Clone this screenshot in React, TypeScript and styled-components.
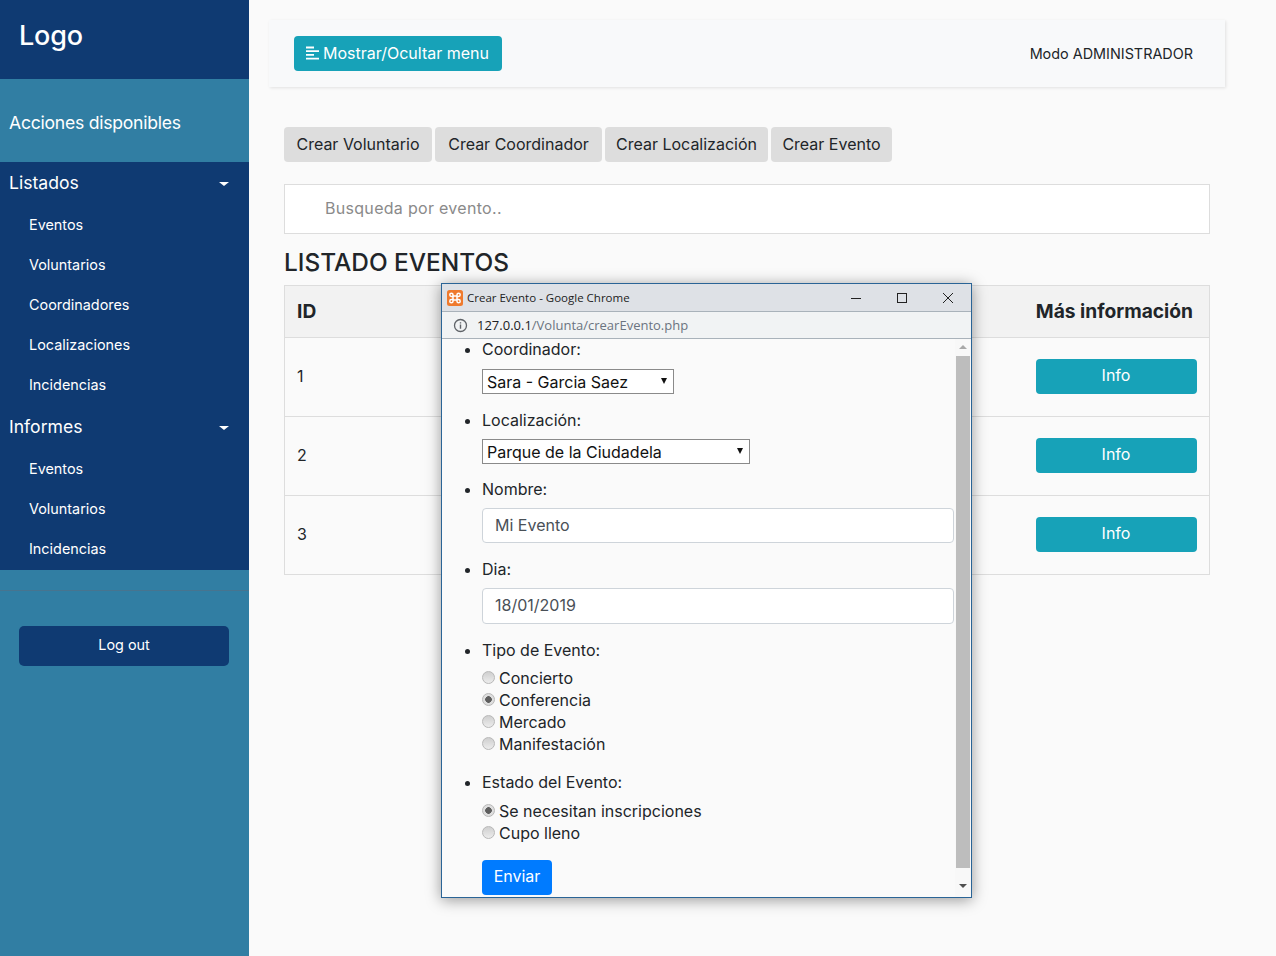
import React, { FC } from "react";
import styled, { createGlobalStyle } from "styled-components";

const FONT = `Inter, "Open Sans", "Liberation Sans", sans-serif`;

const GlobalStyle = createGlobalStyle`
  html, body {
    margin: 0;
    padding: 0;
    height: 956px;
    overflow: hidden;
    background: #fafafa;
    font-family: ${FONT};
    color: #212529;
  }
  * {
    box-sizing: border-box;
  }
`;

const MENU = [
  { title: "Listados", items: ["Eventos", "Voluntarios", "Coordinadores", "Localizaciones", "Incidencias"] },
  { title: "Informes", items: ["Eventos", "Voluntarios", "Incidencias"] },
];

const ACTIONS = [
  { label: "Crear Voluntario", width: 148 },
  { label: "Crear Coordinador", width: 167 },
  { label: "Crear Localización", width: 163 },
  { label: "Crear Evento", width: 121 },
];

const TIPOS = [
  { label: "Concierto", checked: false },
  { label: "Conferencia", checked: true },
  { label: "Mercado", checked: false },
  { label: "Manifestación", checked: false },
];

const ESTADOS = [
  { label: "Se necesitan inscripciones", checked: true },
  { label: "Cupo lleno", checked: false },
];

export default function App() {
  return (
    <Page>
      <GlobalStyle />
      <Sidebar />
      <Content>
        <TopBar>
          <ToggleButton>
            <AlignIcon />
            Mostrar/Ocultar menu
          </ToggleButton>
          <Mode>Modo ADMINISTRADOR</Mode>
        </TopBar>
        <Actions>
          {ACTIONS.map((a) => (
            <ActionButton key={a.label} $width={a.width}>
              {a.label}
            </ActionButton>
          ))}
        </Actions>
        <Search placeholder="Busqueda por evento.." />
        <Heading>LISTADO EVENTOS</Heading>
        <Table>
          <thead>
            <tr>
              <HeadCell>ID</HeadCell>
              <HeadCell $right>Más información</HeadCell>
            </tr>
          </thead>
          <tbody>
            {[1, 2, 3].map((id) => (
              <tr key={id}>
                <Cell>{id}</Cell>
                <InfoCell>
                  <InfoButton>Info</InfoButton>
                </InfoCell>
              </tr>
            ))}
          </tbody>
        </Table>
      </Content>
      <PopupWindow />
    </Page>
  );
}

const Sidebar: FC = () => (
  <Side>
    <Brand>Logo</Brand>
    <Available>Acciones disponibles</Available>
    <Menu>
      {MENU.map((group) => (
        <li key={group.title}>
          <GroupTitle>
            {group.title}
            <Caret />
          </GroupTitle>
          {group.items.map((item) => (
            <SubItem key={item}>{item}</SubItem>
          ))}
        </li>
      ))}
    </Menu>
    <Divider />
    <LogOut>Log out</LogOut>
  </Side>
);

const PopupWindow: FC = () => (
  <Popup>
    <TitleBar>
      <XamppIcon />
      <WindowTitle>Crear Evento - Google Chrome</WindowTitle>
      <WindowControls>
        <svg width="12" height="12" viewBox="0 0 12 12">
          <path d="M1 6.5h10" stroke="#222" strokeWidth="1" />
        </svg>
        <svg width="12" height="12" viewBox="0 0 12 12">
          <rect x="1.5" y="1.5" width="9" height="9" fill="none" stroke="#222" strokeWidth="1" />
        </svg>
        <svg width="12" height="12" viewBox="0 0 12 12">
          <path d="M1 1l10 10M11 1L1 11" stroke="#222" strokeWidth="1" fill="none" />
        </svg>
      </WindowControls>
    </TitleBar>
    <AddressBar>
      <svg width="15" height="15" viewBox="0 0 15 15">
        <circle cx="7.5" cy="7.5" r="6" fill="none" stroke="#5f6368" strokeWidth="1.3" />
        <path d="M7.5 6.6v4.2M7.5 4.2v1.3" stroke="#5f6368" strokeWidth="1.4" fill="none" />
      </svg>
      <Url>
        127.0.0.1<UrlPath>/Volunta/crearEvento.php</UrlPath>
      </Url>
    </AddressBar>
    <PopupBody>
      <FormArea>
        <FormList>
          <FormItem $gap={9} $after={16}>
            <FieldLabel>Coordinador:</FieldLabel>
            <SelectWrap $width={192}>
              <SelectBox defaultValue="sara">
                <option value="sara">Sara - Garcia Saez</option>
              </SelectBox>
            </SelectWrap>
          </FormItem>
          <FormItem $gap={8} $after={15}>
            <FieldLabel>Localización:</FieldLabel>
            <SelectWrap $width={268}>
              <SelectBox defaultValue="parque">
                <option value="parque">Parque de la Ciudadela</option>
              </SelectBox>
            </SelectWrap>
          </FormItem>
          <FormItem $gap={8} $after={16}>
            <FieldLabel>Nombre:</FieldLabel>
            <TextField $height={35} defaultValue="Mi Evento" />
          </FormItem>
          <FormItem $gap={8} $after={16}>
            <FieldLabel>Dia:</FieldLabel>
            <TextField $height={36} defaultValue="18/01/2019" />
          </FormItem>
          <FormItem $gap={6} $after={17}>
            <FieldLabel>Tipo de Evento:</FieldLabel>
            <Radios>
              {TIPOS.map((t) => (
                <RadioRow key={t.label}>
                  <Radio type="radio" name="tipo" defaultChecked={t.checked} />
                  {t.label}
                </RadioRow>
              ))}
            </Radios>
          </FormItem>
          <FormItem $gap={7} $after={16}>
            <FieldLabel>Estado del Evento:</FieldLabel>
            <Radios>
              {ESTADOS.map((t) => (
                <RadioRow key={t.label}>
                  <Radio type="radio" name="estado" defaultChecked={t.checked} />
                  {t.label}
                </RadioRow>
              ))}
            </Radios>
          </FormItem>
        </FormList>
        <SendButton>Enviar</SendButton>
      </FormArea>
      <ScrollTrack>
        <ScrollArrow $up />
        <ScrollThumb />
        <ScrollArrow />
      </ScrollTrack>
    </PopupBody>
  </Popup>
);

const AlignIcon: FC = () => (
  <svg width="14" height="14" viewBox="0 0 14 14">
    <path d="M0 1.5h8M0 5.2h13M0 8.9h8M0 12.6h13" stroke="#fff" strokeWidth="1.8" fill="none" />
  </svg>
);

const XamppIcon: FC = () => (
  <svg width="16" height="16" viewBox="0 0 16 16">
    <rect width="16" height="16" rx="2.5" fill="#ef7a2d" />
    <path
      d="M6 6H10V10H6ZM6 6V4.8A1.6 1.6 0 1 0 4.4 6.4H6M10 6V4.8A1.6 1.6 0 1 1 11.6 6.4H10M6 10V11.2A1.6 1.6 0 1 1 4.4 9.6H6M10 10V11.2A1.6 1.6 0 1 0 11.6 9.6H10"
      fill="none"
      stroke="#fff"
      strokeWidth="1.5"
    />
  </svg>
);

const Page = styled.div`
  position: relative;
  display: flex;
  width: 1276px;
  height: 956px;
  overflow: hidden;
`;

const Side = styled.nav`
  width: 249px;
  flex: none;
  height: 956px;
  background: #317ea3;
  color: #fff;
`;

const Brand = styled.h3`
  margin: 0;
  height: 79px;
  padding: 17px 19px 0;
  background: #0f3a72;
  font-size: 27px;
  line-height: 38px;
  font-weight: 500;
  letter-spacing: -0.2px;
`;

const Available = styled.p`
  margin: 0;
  height: 83px;
  padding: 3px 9px 0;
  display: flex;
  align-items: center;
  font-size: 17.6px;
  letter-spacing: -0.25px;
`;

const Menu = styled.ul`
  list-style: none;
  margin: 0;
  padding: 0;
  background: #0f3a72;
`;

const GroupTitle = styled.div`
  position: relative;
  display: flex;
  align-items: center;
  height: 43px;
  padding: 0 9px 2px;
  font-size: 17.6px;
`;

const Caret = styled.span`
  position: absolute;
  right: 20px;
  top: 20px;
  border-top: 4.5px solid #fff;
  border-left: 5px solid transparent;
  border-right: 5px solid transparent;
`;

const SubItem = styled.div`
  display: flex;
  align-items: center;
  height: 40px;
  padding: 0 0 2px 29px;
  font-size: 14.4px;
  &:last-child {
    height: 41px;
  }
`;

const Divider = styled.div`
  height: 1px;
  margin-top: 20px;
  background: #47748f;
`;

const LogOut = styled.button`
  display: block;
  width: 210px;
  height: 40px;
  margin: 35px 0 0 19px;
  padding: 0 0 3px;
  border: none;
  border-radius: 5px;
  background: #0f3a72;
  color: #fff;
  font-family: ${FONT};
  font-size: 14.4px;
`;

const Content = styled.main`
  flex: 1;
  min-width: 0;
  padding: 20px 66px 0 20px;
`;

const TopBar = styled.header`
  display: flex;
  align-items: center;
  justify-content: space-between;
  height: 67px;
  margin-right: -15px;
  padding: 0 32px 0 25px;
  background: #f8f9fa;
  box-shadow: 1px 1px 3px rgba(0, 0, 0, 0.1);
`;

const ToggleButton = styled.button`
  display: flex;
  align-items: center;
  gap: 3px;
  height: 35px;
  padding: 0 12px 2px;
  border: none;
  border-radius: 4px;
  background: #17a2b8;
  color: #fff;
  font-family: ${FONT};
  font-size: 16px;
  width: 208px;
`;

const Mode = styled.span`
  font-size: 14.4px;
  padding-bottom: 1px;
`;

const Actions = styled.div`
  display: flex;
  gap: 3px;
  margin: 40px 0 0 15px;
`;

const ActionButton = styled.button<{ $width: number }>`
  width: ${({ $width }) => $width}px;
  height: 35px;
  padding: 0 0 2px;
  border: none;
  border-radius: 4px;
  background: #ddd;
  color: #212529;
  font-family: ${FONT};
  font-size: 16px;
`;

const Search = styled.input`
  display: block;
  width: 926px;
  height: 50px;
  margin: 22px 0 0 15px;
  padding: 0 40px 2px;
  border: 1px solid #ddd;
  background: #fff;
  font-family: ${FONT};
  font-size: 16px;
  letter-spacing: 0.3px;
  outline: none;
  &::placeholder {
    color: #8a8a8a;
  }
`;

const Heading = styled.h2`
  margin: 12px 0 0 15px;
  height: 39px;
  font-size: 24.4px;
  line-height: 33px;
  font-weight: 500;
`;

const Table = styled.table`
  width: 926px;
  margin-left: 15px;
  border-collapse: collapse;
`;

const HeadCell = styled.th<{ $right?: boolean }>`
  height: 52px;
  padding: ${({ $right }) => ($right ? "0 16px 2px 0" : "0 12px 2px")};
  background: #f2f2f2;
  border: 1px solid #ddd;
  border-left: ${({ $right }) => ($right ? "none" : "1px solid #ddd")};
  border-right: ${({ $right }) => ($right ? "1px solid #ddd" : "none")};
  text-align: ${({ $right }) => ($right ? "right" : "left")};
  font-size: 19.2px;
  font-weight: 700;
  white-space: nowrap;
`;

const Cell = styled.td`
  height: 79px;
  padding: 0 12px 3px;
  border: 1px solid #ddd;
  border-right: none;
  font-size: 16px;
`;

const InfoCell = styled.td`
  width: 174px;
  padding: 0 12px 2px 0;
  border: 1px solid #ddd;
  border-left: none;
`;

const InfoButton = styled.button`
  display: block;
  width: 161px;
  height: 35px;
  padding: 0 0 2px;
  border: none;
  border-radius: 4px;
  background: #17a2b8;
  color: #fff;
  font-family: ${FONT};
  font-size: 16px;
`;

const Popup = styled.section`
  position: absolute;
  left: 441px;
  top: 283px;
  width: 531px;
  height: 615px;
  display: flex;
  flex-direction: column;
  border: 1px solid #2a6496;
  background: #fafafa;
  box-shadow: 0 2px 14px rgba(0, 0, 0, 0.4);
`;

const TitleBar = styled.div`
  display: flex;
  align-items: center;
  height: 28px;
  flex: none;
  padding-left: 5px;
  background: #dee1e6;
  border-bottom: 1px solid #a9b2ba;
`;

const WindowTitle = styled.span`
  margin-left: 4px;
  font-family: "Open Sans", sans-serif;
  font-size: 11.5px;
  color: #222;
`;

const WindowControls = styled.div`
  display: flex;
  gap: 34px;
  margin-left: auto;
  margin-right: 17px;
`;

const AddressBar = styled.div`
  display: flex;
  align-items: center;
  gap: 9px;
  height: 27px;
  flex: none;
  padding-left: 11px;
  background: #f1f3f4;
  border-bottom: 1px solid #a9b2ba;
`;

const Url = styled.span`
  font-family: "Open Sans", sans-serif;
  font-size: 13px;
  color: #202124;
`;

const UrlPath = styled.span`
  color: #6b7480;
`;

const PopupBody = styled.div`
  flex: 1;
  min-height: 0;
  display: flex;
  overflow: hidden;
`;

const FormArea = styled.div`
  flex: 1;
  min-width: 0;
  padding-left: 40px;
`;

const FormList = styled.ul`
  margin: 0;
  padding: 0;
  font-size: 16px;
`;

const FormItem = styled.li<{ $gap: number; $after: number }>`
  display: flex;
  flex-direction: column;
  align-items: flex-start;
  gap: ${({ $gap }) => $gap}px;
  margin-bottom: ${({ $after }) => $after}px;
  &::before {
    content: "";
    position: absolute;
    margin: 9px 0 0 -17px;
    width: 5px;
    height: 5px;
    border-radius: 50%;
    background: #212529;
  }
`;

const FieldLabel = styled.span`
  display: block;
  line-height: 21px;
`;

const SelectWrap = styled.div<{ $width: number }>`
  position: relative;
  width: ${({ $width }) => $width}px;
  &::after {
    content: "";
    position: absolute;
    right: 7px;
    top: 9px;
    border-top: 6px solid #111;
    border-left: 3px solid transparent;
    border-right: 3px solid transparent;
  }
`;

const SelectBox = styled.select`
  display: block;
  width: 100%;
  height: 25px;
  padding: 0 4px;
  appearance: none;
  border: 1px solid #8a8a8a;
  border-radius: 0;
  background: #fff;
  color: #111;
  font-family: ${FONT};
  font-size: 16px;
  outline: none;
`;

const TextField = styled.input<{ $height: number }>`
  display: block;
  width: 472px;
  height: ${({ $height }) => $height}px;
  padding: 0 12px 2px;
  border: 1px solid #ced4da;
  border-radius: 4px;
  background: #fff;
  color: #495057;
  font-family: ${FONT};
  font-size: 16px;
  outline: none;
`;

const Radios = styled.div`
  display: flex;
  flex-direction: column;
`;

const RadioRow = styled.label`
  display: flex;
  align-items: center;
  height: 22px;
  gap: 4px;
  font-size: 16px;
`;

const Radio = styled.input`
  appearance: none;
  width: 13px;
  height: 13px;
  margin: -2px 0 0;
  border-radius: 50%;
  border: 1px solid #b8b8b8;
  background: linear-gradient(#cfcfcf, #ececec);
  &:checked {
    background: radial-gradient(circle, #5e5e5e 0 3px, #dedede 3.6px);
  }
`;

const SendButton = styled.button`
  display: block;
  width: 70px;
  height: 35px;
  padding: 0 0 3px;
  border: none;
  border-radius: 4px;
  background: #007bff;
  color: #fff;
  font-family: ${FONT};
  font-size: 16px;
`;

const ScrollTrack = styled.div`
  width: 16px;
  flex: none;
  display: flex;
  flex-direction: column;
  align-items: center;
  background: #f8f8f8;
`;

const ScrollArrow = styled.span<{ $up?: boolean }>`
  flex: none;
  margin: ${({ $up }) => ($up ? "6px 0 7px" : "16px 0 0")};
  border-left: 4px solid transparent;
  border-right: 4px solid transparent;
  ${({ $up }) => ($up ? "border-bottom: 4px solid #a8a8a8;" : "border-top: 4px solid #505050;")}
`;

const ScrollThumb = styled.div`
  width: 14px;
  height: 512px;
  background: #bdbdbd;
`;
